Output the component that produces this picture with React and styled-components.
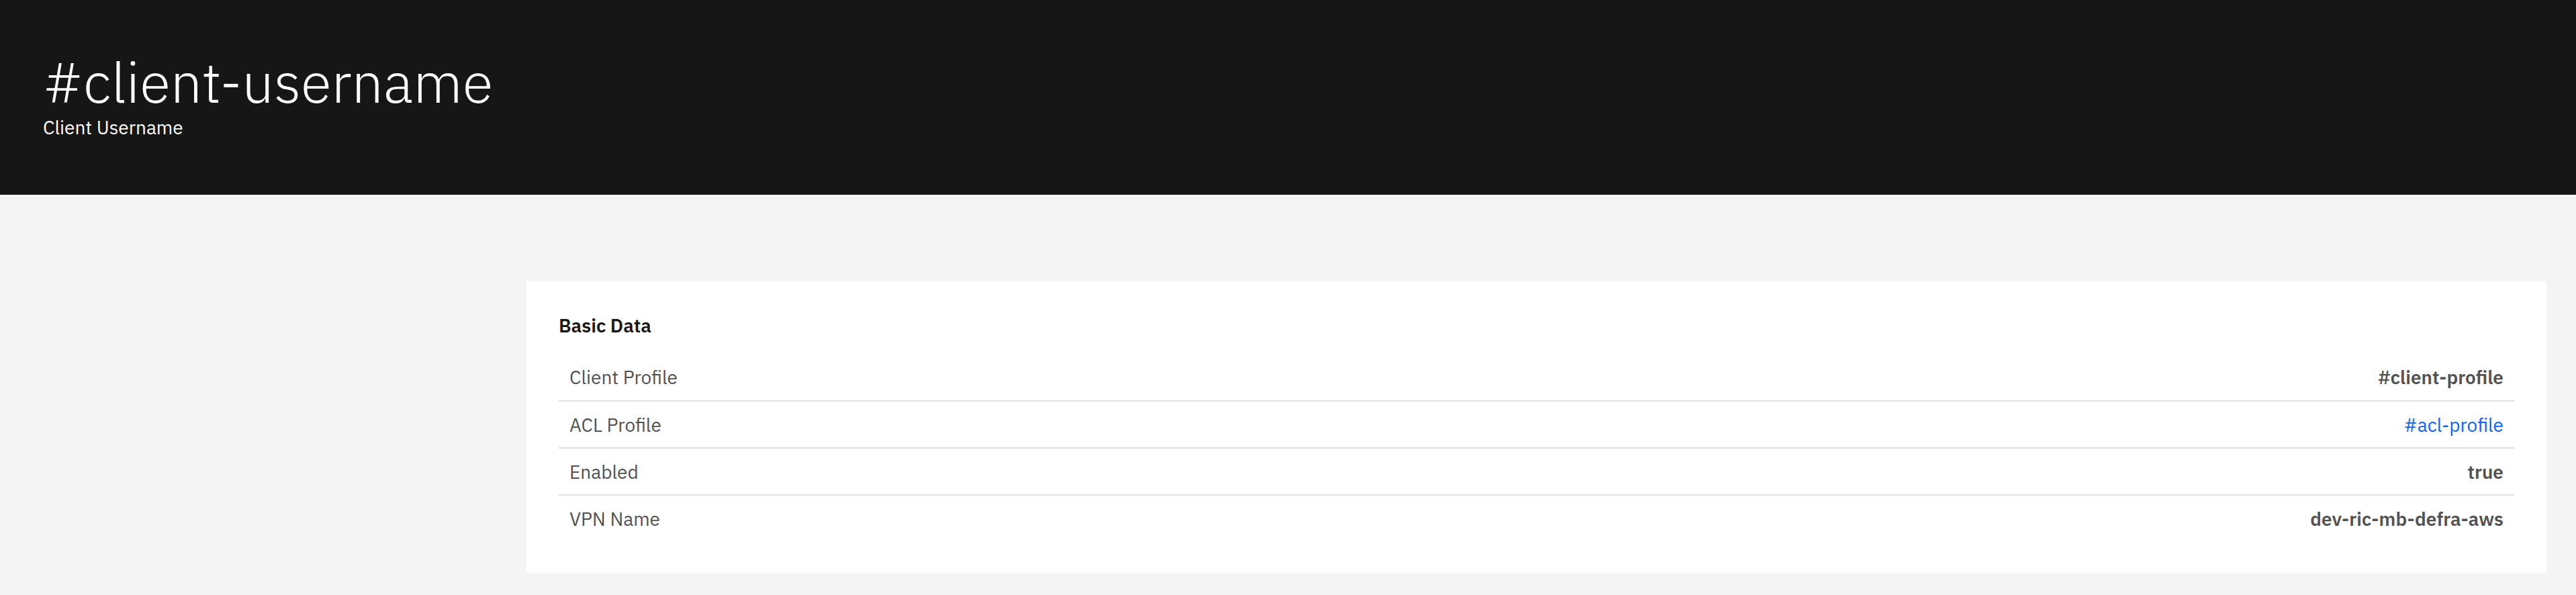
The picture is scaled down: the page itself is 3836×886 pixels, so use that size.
import styled, { createGlobalStyle } from 'styled-components'

const GlobalStyle = createGlobalStyle`
  html, body {
    margin: 0;
    padding: 0;
    background: #f4f4f4;
  }
  body {
    font-family: "IBM Plex Sans", Roboto, "Liberation Sans", sans-serif;
  }
`

const rows = [
  { label: 'Client Profile', value: '#client-profile' },
  { label: 'ACL Profile', value: '#acl-profile', link: true },
  { label: 'Enabled', value: 'true' },
  { label: 'VPN Name', value: 'dev-ric-mb-defra-aws' },
]

const App = () => {
  return (
    <Page>
      <GlobalStyle />
      <Header>
        <Title>#client-username</Title>
        <Subtitle>Client Username</Subtitle>
      </Header>
      <Main>
        <Aside />
        <Card>
          <CardTitle>Basic Data</CardTitle>
          <List>
            {rows.map((row) => (
              <Row key={row.label}>
                <Label>{row.label}</Label>
                <Value $link={row.link}>{row.value}</Value>
              </Row>
            ))}
          </List>
        </Card>
      </Main>
    </Page>
  )
}

export default App

const Page = styled.div`
  min-height: 886px;
  background: #f4f4f4;
`
const Header = styled.header`
  height: 290px;
  box-sizing: border-box;
  padding: 72px 64px 0;
  background: #161616;
  color: #ffffff;
`
const Title = styled.h1`
  margin: 0;
  font-size: 84px;
  font-weight: 300;
  line-height: 100px;
  letter-spacing: 0;
`
const Subtitle = styled.div`
  font-size: 28px;
  line-height: 36px;
  font-weight: 400;
`
const Main = styled.main`
  display: grid;
  grid-template-columns: 720px 1fr;
  padding: 129px 44px 0 64px;
`
const Aside = styled.div``
const Card = styled.section`
  background: #ffffff;
  padding: 48px 48px 47px;
`
const CardTitle = styled.h3`
  margin: 0 0 23px;
  font-size: 28px;
  line-height: 36px;
  font-weight: 600;
  color: #161616;
`
const List = styled.div`
  display: flex;
  flex-direction: column;
`
const Row = styled.div`
  display: flex;
  align-items: center;
  justify-content: space-between;
  height: 70px;
  box-sizing: border-box;
  padding: 0 16px;
  font-size: 28px;
  color: #525252;
  & + & {
    border-top: 2px solid #e0e0e0;
  }
`
const Label = styled.span`
  font-weight: 400;
`
const Value = styled.span`
  font-weight: ${({ $link }) => ($link ? 400 : 600)};
  color: ${({ $link }) => ($link ? '#0f62fe' : '#525252')};
`
